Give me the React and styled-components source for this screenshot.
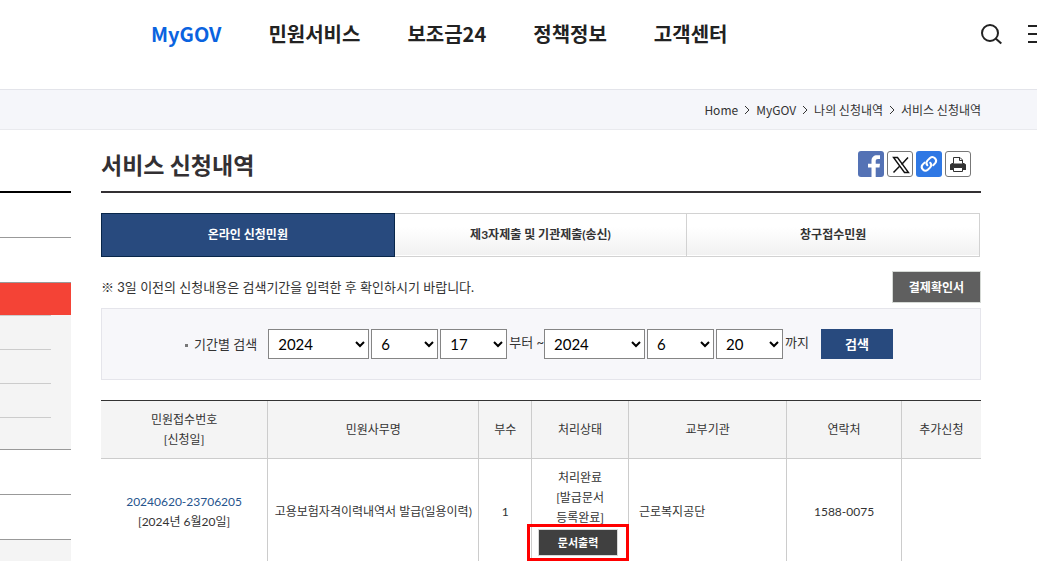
import React, {useState} from 'react'
import styled, {createGlobalStyle, ThemeProvider} from 'styled-components'

const theme = {
  colors: {
    ink: '#222222',
    text: '#333333',
    heading: '#333033',
    blue: '#0a63df',
    navy: '#284a7e',
    red: '#f44336',
    line: '#cccccc',
    gray: '#999999',
    panel: '#f4f4f4',
    paleBlue: '#f5f6fa'
  },
  fonts: {
    body: "Lato, 'Noto Sans CJK KR', sans-serif",
    site: "'Noto Sans CJK KR', 'Noto Sans', sans-serif"
  }
}

const GlobalStyle = createGlobalStyle`
  *, *::before, *::after {
    box-sizing: border-box;
  }

  body {
    margin: 0;
    background: #ffffff;
    color: ${theme.colors.text};
    font-family: ${theme.fonts.body};
    font-size: 12px;
    line-height: 20px;
  }

  a {
    color: inherit;
    text-decoration: none;
  }

  button, select {
    font-family: inherit;
    cursor: pointer;
  }
`

//
// --- Layout ---
const Page = styled.div`
  overflow: hidden;
`

const Body = styled.div`
  display: flex;
  gap: 30px;
  padding-right: 56px;
`

//
// --- Header ---
const Header = styled.header`
  display: flex;
  justify-content: space-between;
  padding: 20px 0 41px 151px;
  font-family: ${props => props.theme.fonts.site};
`

const MainNav = styled.nav`
  display: flex;
  gap: 47px;
`

const NavLink = styled.a`
  color: ${props =>
    props.$active ? props.theme.colors.blue : props.theme.colors.ink};
  font-size: 20px;
  font-weight: 700;
  line-height: 28px;
  white-space: nowrap;
`

const HeaderTools = styled.div`
  display: flex;
  flex-shrink: 0;
  gap: 25px;
  margin-right: -16px;
`

const IconButton = styled.button`
  display: flex;
  align-items: center;
  padding: 0;
  border: 0;
  background: none;
  color: ${props => props.theme.colors.ink};
`

//
// --- Breadcrumb ---
const Breadcrumb = styled.nav`
  display: flex;
  justify-content: flex-end;
  align-items: center;
  gap: 6px;
  padding: 10px 56px 9px 0;
  border-top: 1px solid #e3e4ea;
  border-bottom: 1px solid #e9eaee;
  background: ${props => props.theme.colors.paleBlue};
  font-family: ${props => props.theme.fonts.site};
`

//
// --- Side menu ---
const SideMenu = styled.aside`
  flex: 0 0 71px;
  margin-top: 61px;
  border-top: 2px solid #000000;
`

const SideItem = styled.div`
  height: ${props => (props.$active ? 32 : 45)}px;
  border-bottom: ${props => (props.$active ? 0 : 1)}px solid
    ${props => props.theme.colors.gray};
  background: ${props => (props.$active ? props.theme.colors.red : 'none')};
`

const SubMenu = styled.div`
  padding-right: 20px;
  border-bottom: 1px solid ${props => props.theme.colors.gray};
  background: ${props => props.theme.colors.panel};
`

const SubItem = styled.div`
  height: 34px;
  border-top: 1px solid ${props => props.theme.colors.line};

  &:last-child {
    height: 32px;
  }
`

const SideFooter = styled.div`
  height: 25px;
  background: ${props => props.theme.colors.panel};
`

//
// --- Main content ---
const Main = styled.main`
  flex: 1;
  min-width: 0;
`

const TitleBar = styled.div`
  display: flex;
  justify-content: space-between;
  align-items: center;
  padding: 17px 10px 10px 0;
  border-bottom: 2px solid ${props => props.theme.colors.heading};
`

const Title = styled.h1`
  margin: 0;
  color: ${props => props.theme.colors.heading};
  font-family: ${props => props.theme.fonts.site};
  font-size: 23px;
  font-weight: 700;
  line-height: 34px;
`

const ShareList = styled.div`
  display: flex;
  gap: 3px;
`

const ShareButton = styled.button`
  display: flex;
  width: 26px;
  height: 26px;
  padding: 0;
  overflow: hidden;
  border: ${props => (props.$fill ? 0 : 1)}px solid #777777;
  border-radius: 3px;
  background: ${props => props.$fill || '#ffffff'};
`

const Tabs = styled.div`
  display: flex;
  margin: 20px 1px 14px 0;
`

const Tab = styled.button`
  flex: 1;
  height: 44px;
  padding: 0 0 4px;
  border: 1px solid ${props => (props.$active ? '#08264a' : '#d2d2d2')};
  border-left-width: ${props => (props.$active ? 1 : 0)}px;
  background: ${props =>
    props.$active
      ? props.theme.colors.navy
      : 'linear-gradient(#ffffff 30%, #f1f1f1)'};
  box-shadow: ${props => (props.$active ? 'none' : 'inset 0 -1px #ffffff')};
  color: ${props => (props.$active ? '#ffffff' : props.theme.colors.text)};
  font-size: 12px;
  font-weight: 700;
`

const NoticeRow = styled.div`
  display: flex;
  justify-content: space-between;
  align-items: center;
  margin-bottom: 5px;
`

const Notice = styled.p`
  margin: 0;
  font-size: 13px;
`

const ReceiptButton = styled.button`
  height: 32px;
  padding: 0 16px 2px;
  border: 1px solid #d5d9d5;
  background: #5f5f5f;
  color: #ffffff;
  font-size: 12px;
  font-weight: 700;
`

const SearchPanel = styled.form`
  display: flex;
  justify-content: center;
  align-items: center;
  padding: 20px 4px 20px 0;
  border: 1px solid #e5e5eb;
  background: #f7f7fa;
  font-size: 13px;
`

const SearchLabel = styled.span`
  margin-right: 11px;

  &::before {
    content: '';
    display: inline-block;
    width: 3px;
    height: 3px;
    margin-right: 6px;
    background: #777777;
    vertical-align: middle;
  }
`

const DateGroup = styled.span`
  display: flex;
  gap: 2px;
`

const Select = styled.select`
  width: ${props => (props.$wide ? 101 : 67)}px;
  height: 30px;
  padding: 0 0 0 5px;
  border: 1px solid #858585;
  border-radius: 0;
  background: #ffffff;
  color: #000000;
  font-size: 15px;
`

const DateSuffix = styled.span`
  padding: 0 0 4px 2px;
`

const SearchButton = styled.button`
  width: 72px;
  height: 30px;
  margin-left: 12px;
  padding: 0 0 2px;
  border: 0;
  background: ${props => props.theme.colors.navy};
  color: #ffffff;
  font-size: 13px;
  font-weight: 700;
`

//
// --- Result table ---
const Table = styled.table`
  width: 100%;
  margin-top: 20px;
  border-top: 1px solid #333333;
  border-collapse: separate;
  border-spacing: 0;
  table-layout: fixed;
`

const Col = styled.col`
  width: ${props => props.$share}%;
`

const HeadCell = styled.th`
  padding: 9px 0 8px;
  border-right: 1px solid ${props => props.theme.colors.line};
  border-bottom: 1px solid ${props => props.theme.colors.line};
  background: ${props => props.theme.colors.panel};
  font-weight: 400;

  &:last-child {
    border-right: 0;
  }
`

const Cell = styled.td`
  padding: 9px 0 8px ${props => (props.$left ? 10 : 0)}px;
  border-right: 1px solid ${props => props.theme.colors.line};
  text-align: ${props => (props.$left ? 'left' : 'center')};
  white-space: nowrap;

  &:last-child {
    border-right: 0;
  }
`

const ReceiptLink = styled.a`
  color: #27548d;
`

const PrintWrap = styled.div`
  display: inline-block;
  position: relative;
  margin: 1px 4px 0 0;
  vertical-align: top;

  &::after {
    content: '';
    position: absolute;
    inset: -5px -11px -5px;
    border: 3px solid #ff0000;
    pointer-events: none;
  }
`

const PrintButton = styled.button`
  display: block;
  width: 80px;
  height: 27px;
  padding: 0 0 2px;
  border: 1px solid #d9d9d9;
  background: #404040;
  color: #ffffff;
  font-size: 11px;
  font-weight: 700;
`

//
// --- Icons ---
const SearchIcon = () => (
  <svg width="23" height="22" viewBox="0 0 23 22" fill="none" stroke="currentColor" strokeWidth="2">
    <circle cx="10" cy="10" r="8" />
    <path d="M15.6 15.4 L21.3 20.6" />
  </svg>
)

const MenuIcon = () => (
  <svg width="25" height="22" viewBox="0 0 25 22" fill="none" stroke="currentColor" strokeWidth="2">
    <path d="M0 3H25M0 11H25M0 19H25" />
  </svg>
)

const ChevronIcon = () => (
  <svg width="6" height="10" viewBox="0 0 6 10" fill="none" stroke="#333333">
    <path d="M1 1L5 5L1 9" />
  </svg>
)

const FacebookIcon = () => (
  <svg width="26" height="26" viewBox="0 0 26 26">
    <path
      fill="#ffffff"
      d="M13.5 26V16.6H10V12.8H13.5V9.8C13.5 6 15.8 4.2 19 4.2H22V8H20C18.4 8 17.7 8.7 17.7 10.2V12.8H22L21.5 16.6H17.7V26Z"
    />
  </svg>
)

const XIcon = () => (
  <svg width="24" height="24" viewBox="0 0 24 24" fill="none" stroke="#111111">
    <path d="M5.5 5.5H9.5L20.5 20.5H16.5Z" strokeWidth="1.4" />
    <path d="M20 5.5L13.6 12.4M11.6 14.3L5.5 20.5" strokeWidth="1.5" />
  </svg>
)

const LinkIcon = () => (
  <svg
    width="26"
    height="26"
    viewBox="0 0 26 26"
    fill="none"
    stroke="#ffffff"
    strokeWidth="2"
    strokeLinecap="round"
  >
    <path d="M11.4 14.3A3.6 3.6 0 0 1 11.6 9.4L14 7A3.7 3.7 0 0 1 19.2 12.2L17.2 14.2" />
    <path d="M14.2 11.7A3.6 3.6 0 0 1 14 16.6L11.8 18.8A3.7 3.7 0 0 1 6.6 13.6L8.6 11.6" />
  </svg>
)

const PrinterIcon = () => (
  <svg width="24" height="24" viewBox="0 0 24 24">
    <path fill="#333333" d="M4 12.5L6 11H18L20 12.5V18H4Z" />
    <path
      fill="#ffffff"
      stroke="#333333"
      d="M7.5 11.5V5.5H14L16.5 8V11.5M7.5 15.5H16.5V19.5H7.5Z"
    />
    <path fill="none" stroke="#333333" d="M13.5 5.5V8.5H16.5" />
  </svg>
)

const navLinks = ['MyGOV', '민원서비스', '보조금24', '정책정보', '고객센터']
const crumbs = ['Home', 'MyGOV', '나의 신청내역', '서비스 신청내역']
const tabs = ['온라인 신청민원', '제3자제출 및 기관제출(송신)', '창구접수민원']
const columnShares = [19, 24, 6, 11, 18, 13, 9]

const years = ['2022', '2023', '2024']
const months = Array.from({length: 12}, (_, i) => String(i + 1))
const days = Array.from({length: 31}, (_, i) => String(i + 1))

const DateSelects = ({label, year, month, day}) => (
  <DateGroup>
    {[
      {name: '년', value: year, options: years},
      {name: '월', value: month, options: months},
      {name: '일', value: day, options: days}
    ].map(({name, value, options}) => (
      <Select
        key={name}
        aria-label={`${label} ${name}`}
        defaultValue={value}
        $wide={options === years}
      >
        {options.map(option => (
          <option key={option}>{option}</option>
        ))}
      </Select>
    ))}
  </DateGroup>
)

const ResultTable = () => (
  <Table>
    <colgroup>
      {columnShares.map((share, index) => (
        <Col key={`col-${index}`} $share={share} />
      ))}
    </colgroup>
    <thead>
      <tr>
        <HeadCell>
          민원접수번호
          <br />
          [신청일]
        </HeadCell>
        <HeadCell>민원사무명</HeadCell>
        <HeadCell>부수</HeadCell>
        <HeadCell>처리상태</HeadCell>
        <HeadCell>교부기관</HeadCell>
        <HeadCell>연락처</HeadCell>
        <HeadCell>추가신청</HeadCell>
      </tr>
    </thead>
    <tbody>
      <tr>
        <Cell>
          <ReceiptLink href="#receipt">20240620-23706205</ReceiptLink>
          <br />
          [2024년 6월20일]
        </Cell>
        <Cell>고용보험자격이력내역서 발급(일용이력)</Cell>
        <Cell>1</Cell>
        <Cell>
          처리완료
          <br />
          [발급문서
          <br />
          등록완료]
          <br />
          <PrintWrap>
            <PrintButton type="button">문서출력</PrintButton>
          </PrintWrap>
        </Cell>
        <Cell $left>근로복지공단</Cell>
        <Cell>1588-0075</Cell>
        <Cell />
      </tr>
    </tbody>
  </Table>
)

const App = () => {
  const [activeTab, setActiveTab] = useState(0)

  return (
    <ThemeProvider theme={theme}>
      <GlobalStyle />
      <Page>
        <Header>
          <MainNav>
            {navLinks.map((link, index) => (
              <NavLink key={link} href="#menu" $active={index === 0}>
                {link}
              </NavLink>
            ))}
          </MainNav>
          <HeaderTools>
            <IconButton type="button" aria-label="검색 열기">
              <SearchIcon />
            </IconButton>
            <IconButton type="button" aria-label="전체메뉴">
              <MenuIcon />
            </IconButton>
          </HeaderTools>
        </Header>
        <Breadcrumb>
          {crumbs.map((crumb, index) => (
            <React.Fragment key={crumb}>
              {index > 0 && <ChevronIcon />}
              <a href="#path">{crumb}</a>
            </React.Fragment>
          ))}
        </Breadcrumb>
        <Body>
          <SideMenu>
            <SideItem />
            <SideItem />
            <SideItem $active />
            <SubMenu>
              <SubItem />
              <SubItem />
              <SubItem />
              <SubItem />
            </SubMenu>
            <SideItem />
            <SideItem />
            <SideFooter />
          </SideMenu>
          <Main>
            <TitleBar>
              <Title>서비스 신청내역</Title>
              <ShareList>
                <ShareButton type="button" aria-label="페이스북" $fill="#5472b5">
                  <FacebookIcon />
                </ShareButton>
                <ShareButton type="button" aria-label="X">
                  <XIcon />
                </ShareButton>
                <ShareButton type="button" aria-label="주소 복사" $fill="#2f78e4">
                  <LinkIcon />
                </ShareButton>
                <ShareButton type="button" aria-label="인쇄">
                  <PrinterIcon />
                </ShareButton>
              </ShareList>
            </TitleBar>
            <Tabs>
              {tabs.map((tab, index) => (
                <Tab
                  key={tab}
                  type="button"
                  $active={index === activeTab}
                  onClick={() => setActiveTab(index)}
                >
                  {tab}
                </Tab>
              ))}
            </Tabs>
            <NoticeRow>
              <Notice>
                ※ 3일 이전의 신청내용은 검색기간을 입력한 후 확인하시기 바랍니다.
              </Notice>
              <ReceiptButton type="button">결제확인서</ReceiptButton>
            </NoticeRow>
            <SearchPanel onSubmit={event => event.preventDefault()}>
              <SearchLabel>기간별 검색</SearchLabel>
              <DateSelects label="시작" year="2024" month="6" day="17" />
              <DateSuffix>부터 ~</DateSuffix>
              <DateSelects label="종료" year="2024" month="6" day="20" />
              <DateSuffix>까지</DateSuffix>
              <SearchButton type="submit">검색</SearchButton>
            </SearchPanel>
            <ResultTable />
          </Main>
        </Body>
      </Page>
    </ThemeProvider>
  )
}

export default App
